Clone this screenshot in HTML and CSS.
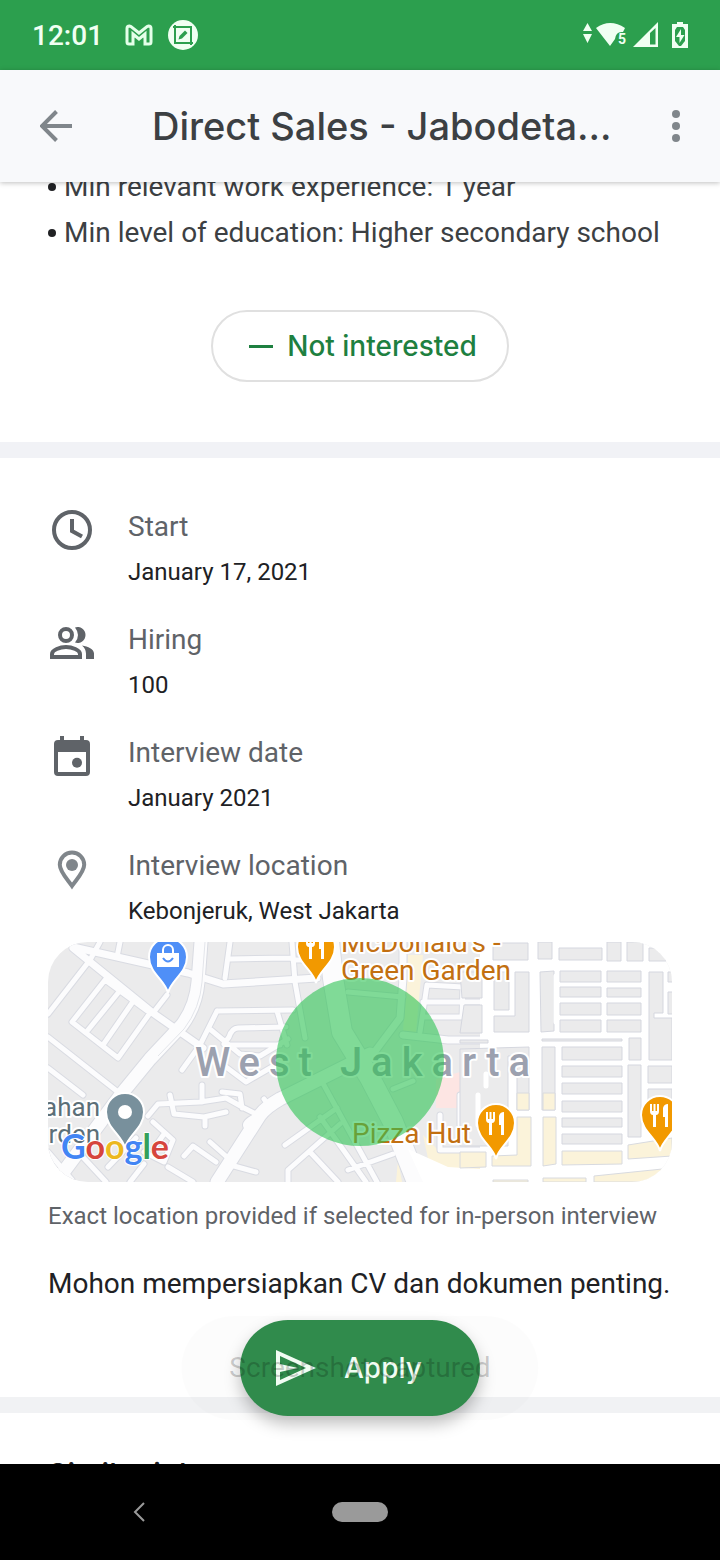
FILE: index.html
```html
<!DOCTYPE html>
<html lang="en">
<head>
    <meta charset="UTF-8">
    <meta name="viewport" content="width=device-width, initial-scale=1.0">
    <title>Direct Sales</title>
    <link rel="stylesheet" href="styles.css">
</head>
<body>
    <div class="status-bar">
        <span class="time">12:01</span>
        <svg class="mail" width="28" height="22" viewBox="0 0 28 22">
            <path d="M2 4.500Q2 2 4.500 2L6 2.500L14 9L22 2.500L23.500 2Q26 2 26 4.500V18Q26 20 24 20H20V10L14 15L8 10V20H4Q2 20 2 18Z"/>
        </svg>
        <svg class="capture" width="30" height="30" viewBox="0 0 30 30">
            <circle cx="15" cy="15" r="15"/>
            <path class="frame" d="M5 7H23V25M7 5V23H25"/>
            <path class="pencil" d="M10.500 19.500L11.500 16L17 10.500L19.500 13L14 18.500Z"/>
        </svg>
        <div class="signals">
            <svg width="46" height="26" viewBox="0 0 46 26">
                <path d="M1 9L5.500 1L10 9ZM1 12H10L5.500 21Z"/>
                <path d="M14 6Q28 -4 43 6L41 10Q34 9 33 17L28 24Z"/>
                <text x="36" y="22">5</text>
            </svg>
            <svg width="26" height="26" viewBox="0 0 26 26">
                <path fill-rule="evenodd" d="M0 25L25 0V25ZM17 11V22.500H22.500V6Z"/>
            </svg>
            <svg class="battery" width="16" height="26" viewBox="0 0 16 26">
                <path d="M5 0H11V2H16V26H0V2H5Z"/>
                <path class="cell" d="M5 5H11L13 8V19L9 24H7L3 19V8Z"/>
                <path d="M9 7L4 15H7.500V21L12.500 13H9Z"/>
            </svg>
        </div>
    </div>

    <header class="app-bar">
        <button class="icon-button" aria-label="Back">
            <svg width="32" height="32" viewBox="0 0 32 32"><path class="arrow" d="M32 16H3M16.500 1.500L2 16L16.500 30.500"/></svg>
        </button>
        <h1>Direct Sales - Jabodeta...</h1>
        <button class="icon-button" aria-label="More options">
            <svg width="8" height="32" viewBox="0 0 8 32"><circle cx="4" cy="4" r="4"/><circle cx="4" cy="16" r="4"/><circle cx="4" cy="28" r="4"/></svg>
        </button>
    </header>

    <main>
        <section class="requirements">
            <ul>
                <li>Min relevant work experience: 1 year</li>
                <li>Min level of education: Higher secondary school</li>
            </ul>
            <button class="not-interested">
                <svg width="24" height="3" viewBox="0 0 24 3"><path d="M0 0H24V3H0Z"/></svg>
                Not interested
            </button>
        </section>

        <section class="details">
            <div class="row">
                <svg class="icon" viewBox="0 0 24 24"><circle class="line" cx="12" cy="12" r="9"/><path class="line" d="M12 6.500V12.500L17 15.300"/></svg>
                <div>
                    <h2>Start</h2>
                    <p>January 17, 2021</p>
                </div>
            </div>
            <div class="row">
                <svg class="icon" viewBox="0 0 24 24">
                    <circle class="line" cx="9" cy="8" r="3"/>
                    <path class="line" d="M2 19V17.500C2 15.500 6 14 9 14S16 15.500 16 17.500V19Z"/>
                    <path d="M13.500 4.200A4 4 0 1 1 13.500 11.800Q16.500 8 13.500 4.200ZM17 13.200C20 13.700 23 15 23 17.300V20H19V17.300Q19 15 17 13.200Z"/>
                </svg>
                <div>
                    <h2>Hiring</h2>
                    <p>100</p>
                </div>
            </div>
            <div class="row">
                <svg class="icon" viewBox="0 0 24 24">
                    <path fill-rule="evenodd" d="M6 2H8V4H16V2H18V4H19Q21 4 21 6V20Q21 22 19 22H5Q3 22 3 20V6Q3 4 5 4H6ZM5 10V20H19V10Z"/>
                    <circle cx="14.500" cy="15.400" r="2.500"/>
                </svg>
                <div>
                    <h2>Interview date</h2>
                    <p>January 2021</p>
                </div>
            </div>
            <div class="row">
                <svg class="icon light" viewBox="0 0 24 24">
                    <path class="line thin" d="M12 20.500C10 17.500 5.900 13.500 5.900 9.900A6.100 6.100 0 0 1 18.100 9.900C18.100 13.500 14 17.500 12 20.500Z"/>
                    <circle cx="12" cy="10" r="3"/>
                </svg>
                <div>
                    <h2>Interview location</h2>
                    <p>Kebonjeruk, West Jakarta</p>
                </div>
            </div>

            <svg class="map" viewBox="0 0 624 240" preserveAspectRatio="xMidYMid slice" role="img" aria-label="Map of West Jakarta">
                <defs>
                    <path id="lanes" d="M42 18L0 72M52 0L42 18M72 0L69 15M57 38L102 71L70 116L24 80ZM70 51L40 88M84 61L55 103M119 53L105 71M0 95L70 150M0 126L35 153M182 0L177 36M182 17L245 16M244 0L247 40L257 96M269 18H245M169 69L245 68M169 69L152 103L134 128M229 69L239 103M238 85L190 86Q184 86 181 95L176 102M163 88L192 112L212 114L240 97M182 103H232M178 125L198 140L236 118M100 174L110 162L152 160L178 156L196 166L210 173M122 153L126 172L156 175L178 170M154 143V160M157 175V184M174 150L192 152L194 166M210 173Q190 182 202 188M216 157L222 165M105 180L125 198L116 220L96 210M116 192L106 206M162 200L180 216M136 214L145 204L168 220M186 224L208 230M120 225L145 240M0 210L24 238M32 212L58 240M60 225L88 196M82 240L96 222M237 203L289 166M272 175L318 240M240 240V228L292 182M262 210L290 240M272 136L329 240M300 228L345 212M300 50L355 55M379 43L415 45L414 75L375 75M375 60H432M379 43L372 90M412 153V183M392 173V208H432M345 147L365 139M440 110V142"/>
                    <path id="streets" d="M25 5L140 31L175 42L269 36M25 6L105 71L155 106M355 0V36L352 76L322 116M355 93L400 98H440"/>
                    <path id="avenues" d="M153 0L150 40Q148 64 134 83L102 117L75 150L8 240M169 240L212 173Q218 165 232 157L322 112"/>
                    <path id="highway" d="M281 0L285 36L294 90L322 136L345 180L369 240"/>
                    <path id="pin" d="M0 36C-2 24 -19 16 -19 0A19 19 0 1 1 19 0C19 16 2 24 0 36Z"/>
                    <path id="cutlery" d="M-10 -11V-4Q-10 0 -7 0V12H-4V0Q-1 0 -1 -4V-11H-3V-4H-4.500V-11H-6.500V-4H-8V-11ZM3 -7Q4 -11 8 -11V12H5V2H3Z"/>
                </defs>
                <rect class="land" width="624" height="240"/>
                <path class="shops" d="M360 13H375L368 90H355ZM375 193L392 210L440 213V230L382 226ZM350 218L354 240H348Z"/>
                <path class="clinic" d="M388 137L412 130V166H388Z"/>
                <g class="casing">
                    <use href="#lanes" stroke-width="7"/>
                    <use href="#streets" stroke-width="9"/>
                    <use href="#avenues" stroke-width="15"/>
                    <use href="#highway" stroke-width="22"/>
                </g>
                <g class="road">
                    <use href="#lanes" stroke-width="5"/>
                    <use href="#streets" stroke-width="7"/>
                    <use href="#avenues" stroke-width="13"/>
                    <use href="#highway" stroke-width="20"/>
                </g>
                <path class="median" d="M157 0L154 40Q152 66 136 87L110 114"/>
                <path class="road-fill" d="M432 0H624V240H375L360 207L400 225L432 227Z"/>
                <path class="block" d="M445 1H480V18H445ZM490 0H504V17H490ZM511 6H554V18H511ZM559 0H573V19H559ZM579 0H595V19H579ZM601 6H618V19H601ZM412 30H434V56H414ZM446 30H461V68H446ZM467 30H481V90H446V74H467ZM416 63H434V91H412ZM492 30L506 29V89L493 90ZM512 29H553V40H512ZM512 45H553V55H512ZM512 61H553V73H512ZM512 78H553V90H512ZM559 29H593V40H559ZM559 46H593V55H559ZM559 61H593V73H559ZM559 78H593V90H559ZM601 30H615V71H606V76H624V118H601ZM620 30H626V40H620ZM620 50H626V72H620ZM494 97H574V99H494ZM581 96H593V118H581ZM580 123H593V195H580ZM600 124H624V141H600ZM600 147H624V190H600ZM412 107L481 105V168H469V114H460V204H412ZM494 105H507V168H494ZM514 105H574V118H514ZM514 124H574V135H514ZM514 141H574V152H514ZM514 159H574V170H514ZM514 176H574V185H514ZM514 192H574V202H514ZM412 98H440V101H412Z"/>
                <path class="shops edged" d="M469 151H481V168H469ZM495 151H507V168H495ZM469 175H483V224H444V214L469 213ZM495 175H508V222L495 224ZM412 210H438V225L412 226ZM514 209H574V222L514 223ZM580 203L624 196V214L580 217ZM546 234L624 226V240H546ZM495 236H538V240H495ZM445 238H480V240H445Z"/>
                <path class="fork" d="M438 132V144M430 153V183M508 34V80"/>

                <g class="pins">
                    <g transform="translate(120 15)">
                        <use href="#pin" fill="#4f8ff7"/>
                        <path class="glyph" d="M-11 -4H11V10H-11Z"/>
                        <path class="handle" d="M-5 -4V-7A5 5 0 0 1 5 -7V-4"/>
                        <path class="smile" d="M-5 1Q0 8 5 1"/>
                    </g>
                    <g transform="translate(268 5)">
                        <use href="#pin" fill="#f29900"/>
                        <use class="glyph" href="#cutlery"/>
                    </g>
                    <g transform="translate(448 181)">
                        <use href="#pin" fill="#f29900"/>
                        <use class="glyph" href="#cutlery"/>
                    </g>
                    <g transform="translate(612 173)">
                        <use href="#pin" fill="#f29900"/>
                        <use class="glyph" href="#cutlery"/>
                    </g>
                    <g transform="translate(77 170)">
                        <use href="#pin" fill="#78909c"/>
                        <circle class="glyph" r="7"/>
                    </g>
                </g>

                <g class="labels">
                    <text class="food" x="293" y="10">McDonald's -</text>
                    <text class="food" x="293" y="38">Green Garden</text>
                    <text class="food" x="304" y="201">Pizza Hut</text>
                    <text class="place" x="52" y="174" text-anchor="end">ahan</text>
                    <text class="place" x="52" y="201" text-anchor="end">rden</text>
                    <text class="district" x="147" y="134">West Jakarta</text>
                </g>
                <circle class="area" cx="312" cy="120" r="84"/>
                <text class="brand" x="13" y="217"><tspan fill="#4285f4">G</tspan><tspan fill="#d6453d">o</tspan><tspan fill="#ecb81f">o</tspan><tspan fill="#4285f4">g</tspan><tspan fill="#34a05a">l</tspan><tspan fill="#d6453d">e</tspan></text>
            </svg>

            <p class="map-note">Exact location provided if selected for in-person interview</p>
            <p class="message">Mohon mempersiapkan CV dan dokumen penting.</p>
        </section>

        <section class="similar">
            <h2>Similar jobs</h2>
        </section>

        <button class="apply">
            <svg width="40" height="36" viewBox="0 0 40 36">
                <path fill-rule="evenodd" d="M0 0L40 18L0 36ZM4 6V14L22 18L4 22V30L30 18Z"/>
            </svg>
            Apply
        </button>
        <div class="toast">Screenshot Captured</div>
    </main>

    <nav class="system-nav">
        <button class="nav-back" aria-label="System back">
            <svg width="12" height="20" viewBox="0 0 12 20"><path d="M11 1L2 10L11 19"/></svg>
        </button>
        <button class="nav-home" aria-label="Home"></button>
    </nav>
</body>
</html>
```
FILE: styles.css
```css
* {
    box-sizing: border-box;
}

body {
    display: flex;
    flex-direction: column;
    height: 100vh;
    margin: 0;
    background-color: #fff;
    font-family: Roboto, sans-serif;
    color: #202124;
    overflow: hidden;
}

h1, h2, p, ul {
    margin: 0;
    padding: 0;
    font-weight: 400;
}

button {
    padding: 0;
    border: none;
    background: none;
    cursor: pointer;
}

svg {
    display: block;
    flex-shrink: 0;
}

/* status bar */
.status-bar {
    display: flex;
    align-items: center;
    flex-shrink: 0;
    height: 70px;
    padding: 0 32px;
    background-color: #2c9f4e;
    color: #f0fff2;
    fill: #f0fff2;
}

.time {
    font-size: 28px;
    font-weight: 500;
}

.mail {
    margin-left: 22px;
    fill: none;
    stroke: #e4ffe9;
    stroke-width: 3;
}

.capture {
    margin-left: 15px;
}

.capture .frame {
    fill: none;
    stroke: #2c9f4e;
    stroke-width: 2;
}

.capture .pencil,
.battery .cell {
    fill: #2c9f4e;
}

.signals {
    display: flex;
    align-items: center;
    gap: 5px;
    margin-left: auto;
}

.signals text {
    font-size: 14px;
    font-weight: 700;
}

.signals .battery {
    margin-left: 8px;
}

/* app bar */
.app-bar {
    position: relative;
    z-index: 1;
    display: flex;
    align-items: center;
    flex-shrink: 0;
    height: 112px;
    padding: 0 40px;
    background-color: #f8f9fb;
    box-shadow: 0 1px 5px rgba(0, 0, 0, 0.25);
}

.app-bar h1 {
    flex: 1;
    margin-left: 80px;
    font-family: Inter, sans-serif;
    font-size: 38px;
    font-weight: 500;
    color: #3c4043;
    white-space: nowrap;
}

.icon-button {
    fill: #80868b;
}

.arrow {
    fill: none;
    stroke: #80868b;
    stroke-width: 4;
}

/* page */
main {
    position: relative;
    flex: 1;
    min-height: 0;
    overflow: hidden;
}

.requirements {
    display: flex;
    flex-direction: column;
    align-items: center;
    padding: 0 48px 60px;
    border-bottom: 16px solid #f1f2f6;
}

/* the list is scrolled partly under the app bar */
.requirements ul {
    align-self: stretch;
    margin-top: -18px;
    list-style: none;
    font-size: 28px;
    line-height: 46px;
    color: #3c4043;
}

.requirements li {
    display: flex;
    align-items: center;
    gap: 8px;
}

.requirements li::before {
    content: "";
    width: 8px;
    height: 8px;
    border-radius: 50%;
    background-color: #202124;
}

.not-interested {
    display: flex;
    align-items: center;
    gap: 14px;
    height: 72px;
    margin-top: 54px;
    padding: 0 30px 0 36px;
    border: 2px solid #e0e0e0;
    border-radius: 36px;
    font-family: Inter, sans-serif;
    font-size: 28px;
    font-weight: 500;
    color: #1e8040;
    fill: #1e8040;
}

.details {
    padding: 46px 48px 93px;
    border-bottom: 16px solid #f1f2f4;
}

.row {
    display: flex;
    gap: 32px;
    margin-bottom: 21px;
    line-height: 45px;
}

.row:nth-child(4) {
    margin-bottom: 7px;
}

.row h2 {
    font-size: 28px;
    color: #5f6368;
}

.row p {
    font-size: 24px;
    line-height: 47px;
}

.icon {
    width: 48px;
    height: 48px;
    margin-top: 2px;
    fill: #5f6368;
}

.icon .line {
    fill: none;
    stroke: #5f6368;
    stroke-width: 2;
}

.light {
    fill: #80868b;
}

.light .line {
    stroke: #80868b;
}

/* map */
.map {
    width: 100%;
    height: 240px;
    border-radius: 40px;
}

.land {
    fill: #ebebec;
}

.shops {
    fill: #fbf3da;
}

.edged {
    stroke: #d8dadf;
}

.clinic {
    fill: #fde5e3;
}

.casing,
.road,
.fork {
    fill: none;
    stroke: #d9dbe2;
    stroke-linecap: round;
    stroke-linejoin: round;
}

.road {
    stroke: #fcfcfd;
}

.median {
    fill: none;
    stroke: #e3e5ea;
}

.road-fill {
    fill: #fff;
}

.block {
    fill: #ebebec;
    stroke: #d5d7df;
}

.fork {
    stroke: #fff;
    stroke-width: 5;
}

.pins use {
    stroke: #fff;
    stroke-width: 2;
}

.pins .glyph {
    fill: #fff;
    stroke: none;
}

.handle,
.smile {
    fill: none;
    stroke: #fff;
    stroke-width: 2;
}

.smile {
    stroke: #4f8ff7;
}

.labels text,
.brand {
    font-size: 26px;
    stroke: #fff;
    stroke-width: 4;
    stroke-linejoin: round;
    paint-order: stroke;
}

.labels .food {
    font-size: 28px;
    fill: #c26f11;
}

.labels .place {
    fill: #5c6f78;
}

.labels .district {
    fill: #9ca1af;
    font-size: 40px;
    font-weight: 500;
    letter-spacing: 9px;
}

.area {
    fill: #2dc353;
    fill-opacity: 0.6;
}

.brand {
    font-family: Lato, sans-serif;
    font-size: 34px;
    font-weight: 700;
    stroke-width: 2;
}

.map-note {
    margin-top: 16px;
    font-size: 24px;
    line-height: 36px;
    color: #5f6368;
    white-space: nowrap;
}

.message {
    margin-top: 30px;
    font-size: 28px;
    line-height: 40px;
    white-space: nowrap;
}

.similar {
    padding: 41px 48px;
}

.similar h2 {
    font-family: Inter, sans-serif;
    font-size: 30px;
    font-weight: 500;
    line-height: 40px;
}

/* floating over the page */
.apply {
    position: absolute;
    bottom: 48px;
    left: 50%;
    display: flex;
    align-items: center;
    gap: 28px;
    width: 240px;
    height: 96px;
    padding-left: 36px;
    border-radius: 48px;
    background-color: #318d4d;
    box-shadow: 0 8px 16px rgba(0, 0, 0, 0.25);
    font-family: Inter, sans-serif;
    font-size: 28px;
    font-weight: 500;
    color: #f4fff6;
    fill: #f4fff6;
    transform: translateX(-50%);
}

.toast {
    position: absolute;
    bottom: 44px;
    left: 50%;
    padding: 32px 48px;
    border-radius: 52px;
    background-color: rgba(0, 0, 0, 0.01);
    font-size: 28px;
    line-height: 40px;
    color: rgba(0, 0, 0, 0.2);
    white-space: nowrap;
    pointer-events: none;
    transform: translateX(-50%);
}

/* system navigation */
.system-nav {
    display: grid;
    grid-template-columns: 1fr 56px 1fr;
    align-items: center;
    flex-shrink: 0;
    height: 96px;
    background-color: #000;
}

.nav-back {
    justify-self: center;
    margin-right: 54px;
}

.nav-back path {
    fill: none;
    stroke: #9a9a9a;
    stroke-width: 2;
}

.nav-home {
    height: 20px;
    border-radius: 10px;
    background-color: #9a9a9a;
}
```
